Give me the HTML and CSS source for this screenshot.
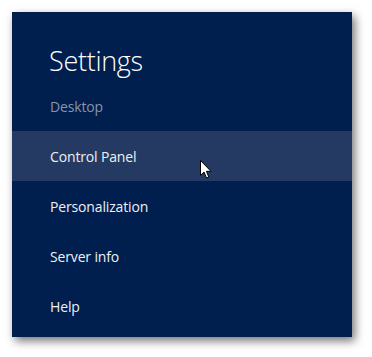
FILE: index.html
```html
<!DOCTYPE html>
<html>
<head>
<meta charset="utf-8">
<link rel="stylesheet" href="styles.css">
</head>
<body>
<div class="charm">
  <div class="header">
    <h1 class="title">Settings</h1>
  </div>
  <div class="row sub">Desktop</div>
  <div class="row active">Control Panel
    <svg class="cursor" width="12" height="19" viewBox="0 0 12 19"><path d="M0.5 0.5 L0.5 15.5 L4 12 L6.5 18 L8.8 17 L6.4 11.3 L11 11.3 Z" fill="#fff" stroke="#000" stroke-width="1"/></svg>
  </div>
  <div class="row">Personalization</div>
  <div class="row">Server info</div>
  <div class="row">Help</div>
</div>
</body>
</html>
```
FILE: styles.css
```css
html, body {
  margin: 0;
  padding: 0;
  background: #ffffff;
}
body {
  padding: 12px 0 20px 12px;
  font-family: "Open Sans", "Noto Sans", sans-serif;
}
.charm {
  width: 340px;
  height: 325px;
  background: #001e4e;
  box-shadow: 3px 4px 9px rgba(0,0,0,0.55);
  display: flex;
  flex-direction: column;
}
.header {
  height: 69px;
  padding-left: 38px;
  display: flex;
  align-items: flex-end;
}
.title {
  margin: 0 0 0 -1px;
  font-weight: 300;
  font-size: 27px;
  line-height: 34px;
  color: #ffffff;
  letter-spacing: -0.3px;
  padding-bottom: 3px;
}
.row {
  position: relative;
  height: 50px;
  display: flex;
  align-items: center;
  padding-left: 38px;
  font-size: 14px;
  color: #eef0f4;
  letter-spacing: -0.15px;
}
.row.sub {
  color: #8993aa;
}
.row.active {
  background: #243a63;
}
.cursor {
  position: absolute;
  left: 188px;
  top: 29px;
}
```
